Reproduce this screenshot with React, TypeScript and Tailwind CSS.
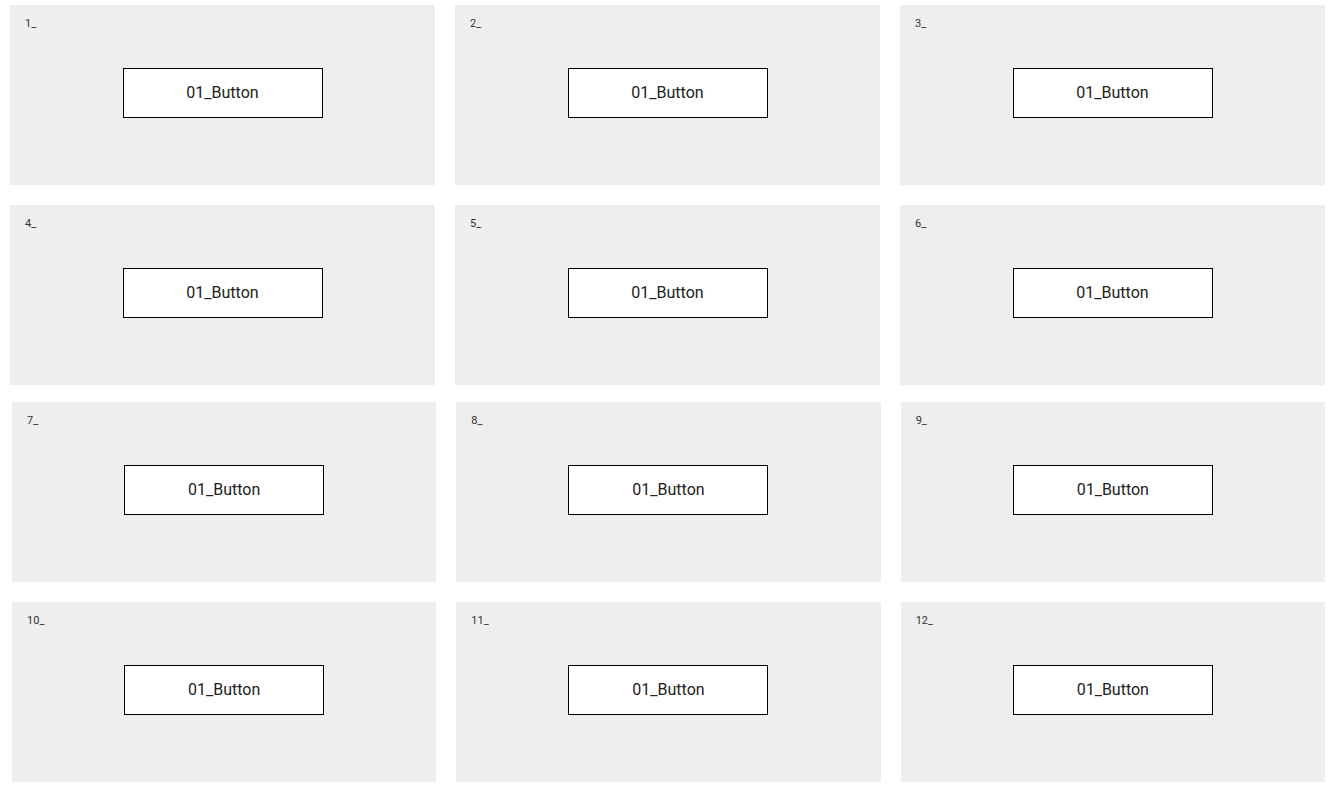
import React from "react";

function Card({ n }: { n: number }) {
  return (
    <div className="h-[180px] bg-[#eeeeee] pt-[12px] px-[15px] flex flex-col">
      <div className="text-[11px] leading-[14px] h-[14px] text-[#333333]">{n}_</div>
      <div className="mx-auto mt-[37px] w-[200px] h-[50px] border border-black bg-white flex items-center justify-center text-[16px] text-[#222222]">
        01_Button
      </div>
    </div>
  );
}

function Row({ start, className }: { start: number; className: string }) {
  return (
    <div className={className}>
      <Card n={start} />
      <Card n={start + 1} />
      <Card n={start + 2} />
    </div>
  );
}

export default function App() {
  return (
    <div
      className="w-[1332px] h-[789px] bg-white overflow-hidden pt-[5px]"
      style={{ fontFamily: "Roboto, 'Liberation Sans', sans-serif" }}
    >
      <Row start={1} className="grid grid-cols-3 gap-x-[20px] ml-[10px] w-[1315px]" />
      <Row start={4} className="grid grid-cols-3 gap-x-[20px] ml-[10px] w-[1315px] mt-[20px]" />
      <Row start={7} className="grid grid-cols-3 gap-x-[20px] ml-[12px] w-[1313px] mt-[17px]" />
      <Row start={10} className="grid grid-cols-3 gap-x-[20px] ml-[12px] w-[1313px] mt-[20px]" />
    </div>
  );
}
